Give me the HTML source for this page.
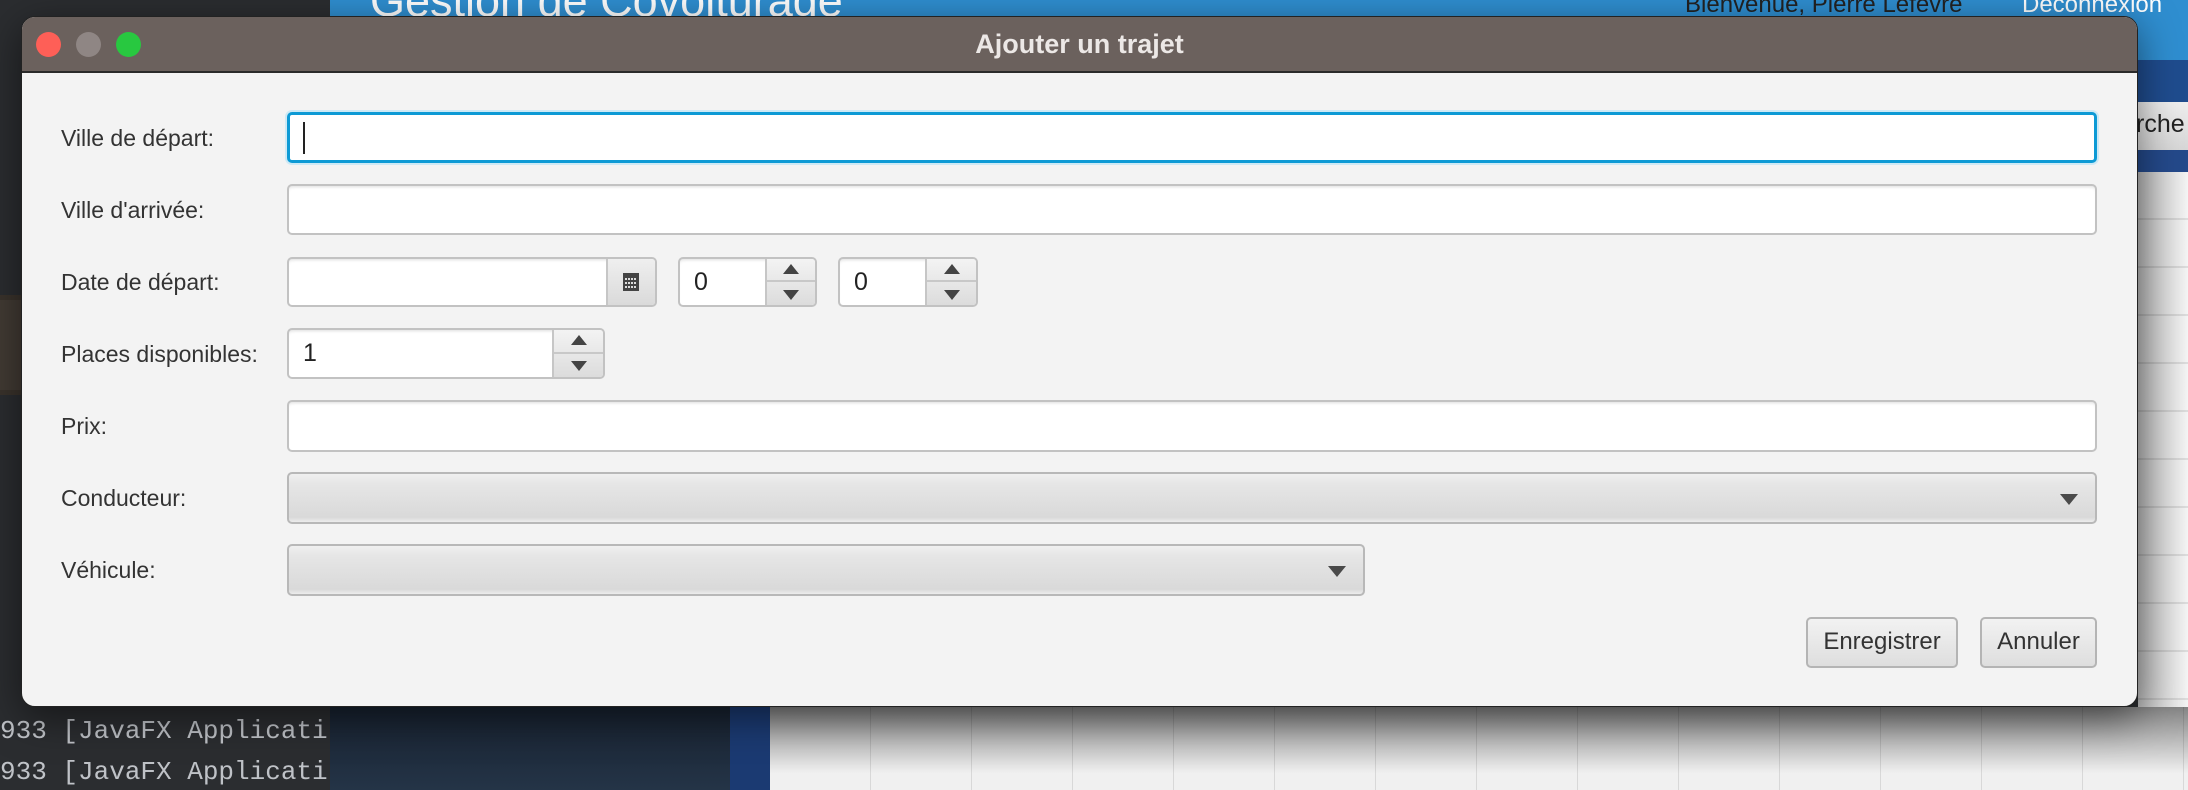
<!DOCTYPE html>
<html><head><meta charset="utf-8">
<style>
*{box-sizing:border-box;margin:0;padding:0}
body{width:2188px;height:790px;overflow:hidden;position:relative;background:#2b2d30;font-family:"Liberation Sans",sans-serif}
.a{position:absolute}
.lbl{position:absolute;left:61px;font-size:23px;color:#333;line-height:24px}
.tf{position:absolute;background:#fff;border:2px solid #c2c2c2;border-radius:5px;box-shadow:inset 0 3px 3px -2px #ddd}
.cb{position:absolute;border:2px solid #b8b8b8;border-radius:5px;background:linear-gradient(#f0f0f0,#e6e6e6 20%,#d9d9d9 90%,#ececec)}
.btn{position:absolute;border:2px solid #b4b4b4;border-radius:5px;background:linear-gradient(#f2f2f2,#dedede);font-size:24px;color:#333;text-align:center;line-height:46px}
.arr{position:absolute;right:0;top:0;bottom:0;border-left:2px solid #c6c6c6;background:linear-gradient(#f3f3f3,#dcdcdc)}
.up,.dn{position:absolute;left:0;right:0;height:50%}
.up{top:0;border-bottom:2px solid #c8c8c8}
.dn{bottom:0}
.up:after,.dn:after{content:"";position:absolute;left:50%;top:50%;margin-left:-8px;border-left:8px solid transparent;border-right:8px solid transparent}
.up:after{border-bottom:10px solid #444;margin-top:-6px}
.dn:after{border-top:10px solid #444;margin-top:-4px}
.tri{position:absolute;width:0;height:0;border-left:9px solid transparent;border-right:9px solid transparent;border-top:11px solid #4a4a4a}
.num{position:absolute;left:14px;top:0;font-size:25px;color:#222;line-height:46px}
.mono{position:absolute;left:0;font-family:"Liberation Mono",monospace;font-size:26px;color:#bfc2c7}
</style></head><body>
<!-- background app -->
<div class="a" style="left:330px;top:0;width:1858px;height:60px;background:#2f8ed0"></div>
<div class="a" style="left:370px;top:-25px;font-size:45px;color:#fff">Gestion de Covoiturage</div>
<div class="a" style="left:1685px;top:-9px;font-size:24px;color:#222">Bienvenue, Pierre Lefèvre</div>
<div class="a" style="left:2022px;top:-9px;font-size:24px;color:#fff">Déconnexion</div>
<div class="a" style="left:2138px;top:60px;width:50px;height:42px;background:#1f4c8e"></div>
<div class="a" style="left:2138px;top:102px;width:50px;height:48px;background:linear-gradient(#eee,#d6d6d6)"></div>
<div class="a" style="left:2136px;top:110px;font-size:25px;color:#222">rche</div>
<div class="a" style="left:2138px;top:150px;width:50px;height:22px;background:#24498a"></div>
<div class="a" style="left:2138px;top:172px;width:50px;height:618px;background:repeating-linear-gradient(#f4f4f4 0,#f4f4f4 46px,#ddd 46px,#ddd 48px)"></div>
<div class="a" style="left:2138px;top:172px;width:50px;height:618px;background:linear-gradient(90deg,rgba(0,0,0,.25),rgba(0,0,0,0))"></div>
<div class="a" style="left:330px;top:707px;width:400px;height:83px;background:linear-gradient(#182230,#243447)"></div>
<div class="a" style="left:730px;top:707px;width:40px;height:83px;background:#1b3a72"></div>
<div class="a" style="left:770px;top:707px;width:1418px;height:83px;background:repeating-linear-gradient(90deg,#f0f0f0 0,#f0f0f0 100px,#d8d8d8 100px,#d8d8d8 101px)"></div>
<div class="a" style="left:770px;top:707px;width:1418px;height:83px;background:linear-gradient(rgba(0,0,0,.45),rgba(0,0,0,0) 80%)"></div>
<div class="a" style="left:0;top:300px;width:21px;height:90px;background:#3a3c40"></div>
<div class="a" style="left:0;top:295px;width:21px;height:100px;background:#4a3a28;opacity:.5"></div>
<div class="mono" style="top:716px">933 [JavaFX Applicati</div>
<div class="mono" style="top:757px">933 [JavaFX Applicati</div>

<!-- dialog -->
<div class="a" style="left:21px;top:16px;width:2117px;height:691px;border-radius:14px;background:#f3f3f3;overflow:hidden;box-shadow:0 10px 40px rgba(0,0,0,.5);border:1px solid #222">
  <div class="a" style="left:0;top:0;right:0;height:56px;background:#6b615d;border-bottom:2px solid #2a2a2a"></div>
  <div class="a" style="left:14px;top:15px;width:25px;height:25px;border-radius:50%;background:#fe5f57"></div>
  <div class="a" style="left:54px;top:15px;width:25px;height:25px;border-radius:50%;background:#8f8684"></div>
  <div class="a" style="left:94px;top:15px;width:25px;height:25px;border-radius:50%;background:#28c840"></div>
  <div class="a" style="left:0;right:0;top:12px;text-align:center;font-size:27px;font-weight:bold;color:#ece8e6">Ajouter un trajet</div>
</div>

<div class="lbl" style="top:126px">Ville de départ:</div>
<div class="lbl" style="top:198px">Ville d'arrivée:</div>
<div class="lbl" style="top:270px">Date de départ:</div>
<div class="lbl" style="top:342px">Places disponibles:</div>
<div class="lbl" style="top:414px">Prix:</div>
<div class="lbl" style="top:486px">Conducteur:</div>
<div class="lbl" style="top:558px">Véhicule:</div>

<div class="tf" style="left:287px;top:112px;width:1810px;height:51px;border:3px solid #0d9ad5;box-shadow:0 0 0 2px #cde9f5"></div>
<div class="a" style="left:303px;top:122px;width:2px;height:32px;background:#222"></div>
<div class="tf" style="left:287px;top:184px;width:1810px;height:51px"></div>

<div class="tf" style="left:287px;top:257px;width:370px;height:50px;overflow:hidden">
  <div class="arr" style="width:49px;background:linear-gradient(#efefef,#dadada)">
    <svg width="16" height="18" style="position:absolute;left:15px;top:14px" viewBox="0 0 16 18"><rect x="0" y="0" width="16" height="18" fill="#444"/><g fill="#ddd"><rect x="2" y="5" width="2" height="2"/><rect x="5" y="5" width="2" height="2"/><rect x="8" y="5" width="2" height="2"/><rect x="11" y="5" width="2" height="2"/><rect x="2" y="9" width="2" height="2"/><rect x="5" y="9" width="2" height="2"/><rect x="8" y="9" width="2" height="2"/><rect x="11" y="9" width="2" height="2"/><rect x="2" y="13" width="2" height="2"/><rect x="5" y="13" width="2" height="2"/><rect x="8" y="13" width="2" height="2"/><rect x="11" y="13" width="2" height="2"/></g></svg>
  </div>
</div>
<div class="tf" style="left:678px;top:257px;width:139px;height:50px;overflow:hidden"><div class="num">0</div><div class="arr" style="width:50px"><div class="up"></div><div class="dn"></div></div></div>
<div class="tf" style="left:838px;top:257px;width:140px;height:50px;overflow:hidden"><div class="num">0</div><div class="arr" style="width:51px"><div class="up"></div><div class="dn"></div></div></div>

<div class="tf" style="left:287px;top:328px;width:318px;height:51px;overflow:hidden"><div class="num">1</div><div class="arr" style="width:51px"><div class="up"></div><div class="dn"></div></div></div>

<div class="tf" style="left:287px;top:400px;width:1810px;height:52px"></div>

<div class="cb" style="left:287px;top:472px;width:1810px;height:52px"><div class="tri" style="right:17px;top:20px"></div></div>
<div class="cb" style="left:287px;top:544px;width:1078px;height:52px"><div class="tri" style="right:17px;top:20px"></div></div>

<div class="btn" style="left:1806px;top:617px;width:152px;height:51px">Enregistrer</div>
<div class="btn" style="left:1980px;top:617px;width:117px;height:51px">Annuler</div>
</body></html>
